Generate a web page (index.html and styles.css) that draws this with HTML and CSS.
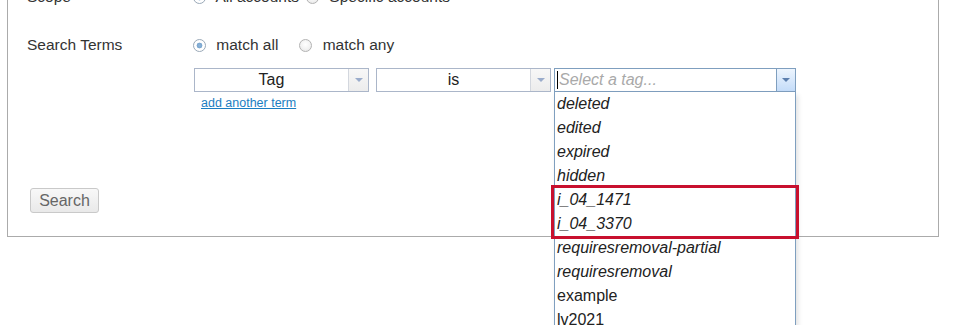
FILE: index.html
```html
<!DOCTYPE html>
<html lang="en">
<head>
    <meta charset="UTF-8" />
    <title>Advanced Search</title>
    <link rel="stylesheet" href="styles.css">
</head>
<body>

<!-- ===== Search form panel ===== -->
<form class="panel" onsubmit="return false">

    <div class="form-row scope-row">
        <label class="form-label">Scope</label>
        <div class="form-field">
            <label class="radio-opt"><input type="radio" name="scope" checked> All accounts</label>
            <label class="radio-opt"><input type="radio" name="scope"> Specific accounts</label>
        </div>
    </div>

    <div class="form-row">
        <label class="form-label">Search Terms</label>
        <div class="form-field">
            <div class="match-line">
                <label class="radio-opt"><input type="radio" name="match" checked> match all</label>
                <label class="radio-opt"><input type="radio" name="match"> match any</label>
            </div>

            <!-- one search term: field / operator / value -->
            <div class="term-row">
                <div class="select select-field">
                    <span class="select-text">Tag</span>
                    <span class="select-btn"><i class="arrow"></i></span>
                </div>
                <div class="select select-op">
                    <span class="select-text">is</span>
                    <span class="select-btn"><i class="arrow"></i></span>
                </div>
                <div class="combo">
                    <div class="combo-input">
                        <span class="caret"></span>
                        <span class="placeholder">Select a tag...</span>
                    </div>
                    <span class="combo-btn"><i class="arrow"></i></span>

                    <!-- open tag list -->
                    <div class="combo-list">
                        <div class="opt deleted">deleted</div>
                        <div class="opt deleted">edited</div>
                        <div class="opt deleted">expired</div>
                        <div class="opt deleted">hidden</div>
                        <div class="highlight">
                            <div class="opt deleted">i_04_1471</div>
                            <div class="opt deleted">i_04_3370</div>
                        </div>
                        <div class="opt deleted">requiresremoval-partial</div>
                        <div class="opt deleted">requiresremoval</div>
                        <div class="opt">example</div>
                        <div class="opt">lv2021</div>
                    </div>
                </div>
            </div>
            <a href="#" class="add-term">add another term</a>
        </div>
    </div>

    <div class="actions">
        <button type="submit" class="btn">Search</button>
    </div>
</form>

</body>
</html>
```

FILE: styles.css
```css
* { box-sizing: border-box; }

body {
    margin: 0;
    min-height: 420px;
    background: #fff;
    color: #333;
    font-family: "Liberation Sans", Arial, sans-serif;
    font-size: 15.5px;
    line-height: 20px;
}

/* ────────── Panel ────────── */
.panel{
    width: 932px;
    margin: -24px 0 0 7px;
    padding: 10px 20px 23px 19px;
    border: 1px solid #ababab;
}

.form-row{
    display: flex;
    align-items: flex-start;
}
.scope-row{ margin-bottom: 28px; }

.form-label{
    width: 167px;
    flex: none;
}
.form-field{
    display: flex;
    flex-direction: column;
    align-items: flex-start;
}
.scope-row .form-field,
.match-line{
    flex-direction: row;
    display: flex;
}

/* ────────── Radios ────────── */
.radio-opt{
    display: inline-flex;
    align-items: center;
    margin-right: 22px;
    white-space: pre;
}
.scope-row .radio-opt{ margin-right: 8px; }
.radio-opt input{
    appearance: none;
    -webkit-appearance: none;
    width: 13px;
    height: 13px;
    margin: 0 6px 0 -1px;
    border: 1px solid #b3b3b3;
    border-radius: 50%;
    background: radial-gradient(circle at 50% 40%, #fff 0, #f2f2f2 55%, #e2e2e2 100%);
}
.radio-opt input:checked{
    border-color: #9aa9b8;
    background:
        radial-gradient(circle, #8fb5d9 0, #7aa6cf 2.6px, #fff 3.2px, #fff 100%);
}

/* ────────── Term selects ────────── */
.term-row{
    display: flex;
    margin-top: 13px;
}
.select{
    display: flex;
    height: 24px;
    border: 1px solid #abb6c9;
    background: #fff;
}
.select-field{ width: 175px; margin-right: 7px; }
.select-op{ width: 175px; margin-right: 3px; }
.select-text{
    flex: 1;
    text-align: center;
    color: #222;
    font-size: 16px;
    line-height: 22px;
}
.select-btn{
    width: 20px;
    border-left: 1px solid #d3d7de;
    background: linear-gradient(#f7f7f7, #ececec);
    display: flex;
    align-items: center;
    justify-content: center;
}
.arrow{
    width: 0;
    height: 0;
    border-left: 4px solid transparent;
    border-right: 4px solid transparent;
    border-top: 4px solid #9aaccb;
}

/* ────────── Tag combo ────────── */
.combo{
    position: relative;
    display: flex;
    width: 242px;
    height: 24px;
    border: 1px solid #7f9fbf;
    background: #fff;
}
.combo-input{
    flex: 1;
    display: flex;
    align-items: center;
    padding-left: 2px;
}
.caret{
    width: 1px;
    height: 18px;
    background: #000;
}
.placeholder{
    color: #a9a9a9;
    font-style: italic;
    font-size: 16px;
    margin-left: 1px;
}
.combo-btn{
    width: 19px;
    border-left: 1px solid #7f9fbf;
    background: linear-gradient(#edf5fe, #c4dcf9);
    display: flex;
    align-items: center;
    justify-content: center;
}
.combo-btn .arrow{ border-top-color: #5c7fae; }

.combo-list{
    position: absolute;
    top: 100%;
    left: -1px;
    width: 242px;
    margin-top: 1px;
    background: #fff;
    border: 1px solid #7f9fbf;
    border-top: none;
    box-shadow: 2px 3px 5px rgba(0,0,0,.12);
    z-index: 10;
}
.opt{
    padding-left: 2px;
    font-size: 16px;
    line-height: 24px;
    color: #222;
}
.opt.deleted{ font-style: italic; }
.highlight{
    outline: 3px solid #c8102e;
    margin: 0 -1px;
    padding: 0 1px;
}

.add-term{
    margin: 3px 0 0 7px;
    font-size: 12.5px;
    line-height: 16px;
    color: #1b7ec2;
}

/* ────────── Submit ────────── */
.actions{ margin-top: 77px; }
.btn{
    width: 69px;
    height: 25px;
    margin-left: 3px;
    padding: 0;
    border: 1px solid #c9c9c9;
    border-radius: 3px;
    background: linear-gradient(#f8f8f8, #e9e9e9);
    color: #666;
    font: 16px "Liberation Sans", Arial, sans-serif;
}
```
